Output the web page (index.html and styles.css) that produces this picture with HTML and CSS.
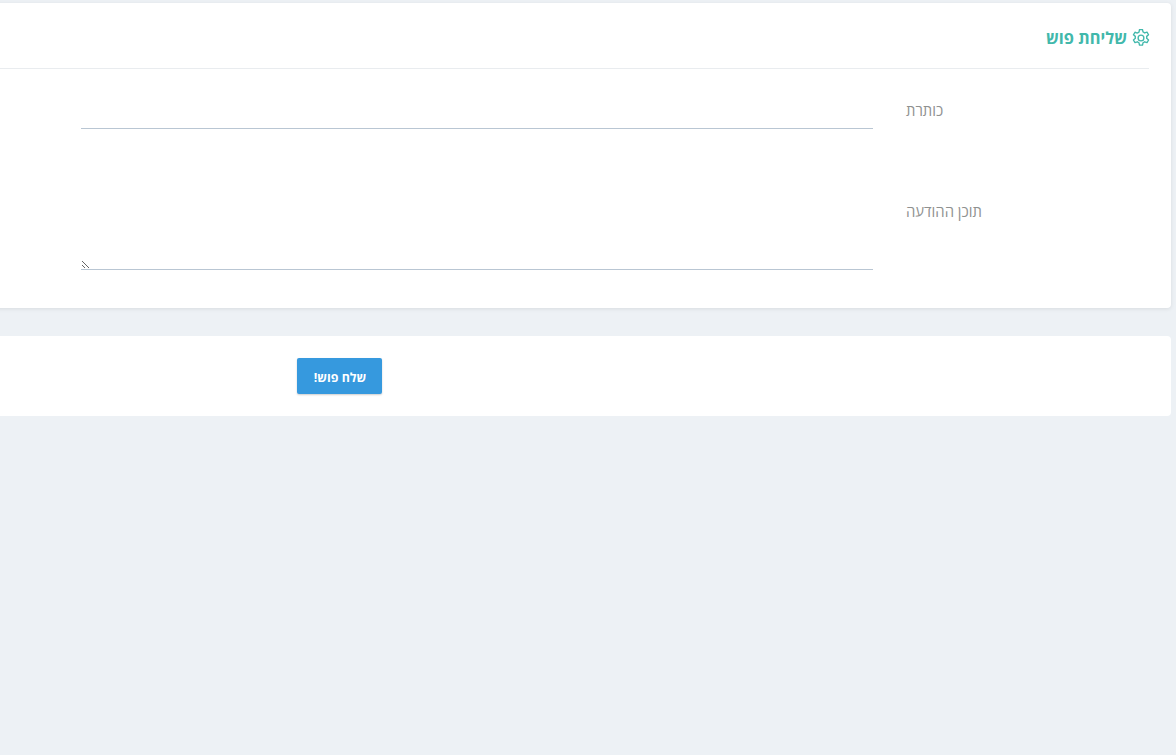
FILE: index.html
```html
<!DOCTYPE html>
<html lang="he" dir="rtl">
<head>
<meta charset="utf-8">
<title>שליחת פוש</title>
<link rel="stylesheet" href="styles.css">
</head>
<body>
<main class="page">
  <section class="card form-card">
    <h2 class="card-title">
      <svg class="gear" viewBox="2 2 20 20" width="18" height="18" fill="none" stroke="currentColor" stroke-width="1.5" stroke-linejoin="round">
        <circle cx="12" cy="12" r="3.2"/>
        <path d="M10.3 2.7h3.4l.5 2.6a7.2 7.2 0 0 1 1.9 1.1l2.6-.9 1.7 2.9-2.1 1.8a7.2 7.2 0 0 1 0 2.2l2.1 1.8-1.7 2.9-2.6-.9a7.2 7.2 0 0 1-1.9 1.1l-.5 2.6h-3.4l-.5-2.6a7.2 7.2 0 0 1-1.9-1.1l-2.6.9-1.7-2.9 2.1-1.8a7.2 7.2 0 0 1 0-2.2L3.6 8.5l1.7-2.9 2.6.9a7.2 7.2 0 0 1 1.9-1.1z"/>
      </svg>
      <span>שליחת פוש</span>
    </h2>
    <form class="form">
      <div class="row row-input">
        <label class="label" for="title">כותרת</label>
        <input class="field" id="title" type="text">
      </div>
      <div class="row row-text">
        <label class="label" for="body">תוכן ההודעה</label>
        <textarea class="field area" id="body"></textarea>
      </div>
    </form>
  </section>
  <section class="card action-card">
    <button class="btn" type="button">שלח פוש!</button>
  </section>
</main>
</body>
</html>
```
FILE: styles.css
```css
* { box-sizing: border-box; }
html, body { margin: 0; height: 100%; overflow: hidden; }
body {
  background: #edf1f5;
  font-family: "Open Sans", "DejaVu Sans", sans-serif;
  color: #99abb4;
}
.page {
  width: 1300px;
  padding: 3px 5px 0 0;
}
.card {
  background: #fff;
  border-radius: 4px;
}
.form-card {
  height: 305px;
  padding: 0 22px 0 0;
  box-shadow: 0 1px 4px rgba(0, 0, 0, 0.09);
}
.card-title {
  display: flex;
  align-items: center;
  gap: 5px;
  height: 66px;
  margin: 0;
  padding-top: 4px;
  border-bottom: 1px solid #e9ecef;
  color: #41b8ab;
  font-size: 16.4px;
  font-weight: 700;
}
.gear {
  flex: none;
  margin-right: -1px;
  margin-top: 1px;
}
.row { display: flex; }
.row-input { height: 60px; }
.row-text { height: 141px; }
.label {
  flex: none;
  width: 243px;
  margin-left: 33px;
  padding-top: 32px;
  font-size: 14.85px;
  line-height: 19px;
  text-align: left;
  color: #8f9190;
}
.row-text .label { padding-top: 73px; }
.field {
  display: block;
  width: 792px;
  height: 100%;
  padding: 0;
  border: 0;
  border-bottom: 1px solid #b9c6d3;
  background: transparent;
  outline: none;
  font: inherit;
}
.area { resize: both; }
.action-card {
  display: flex;
  height: 80px;
  margin-top: 28px;
  padding: 22px 789px 0 0;
}
.btn {
  width: 85px;
  height: 36px;
  padding: 2px 0 0 1px;
  border: 0;
  border-radius: 2px;
  background: #3699de;
  box-shadow: 0 1px 2px rgba(0, 0, 0, 0.2);
  color: #fff;
  font-family: inherit;
  font-size: 12.4px;
  font-weight: 700;
}
```
